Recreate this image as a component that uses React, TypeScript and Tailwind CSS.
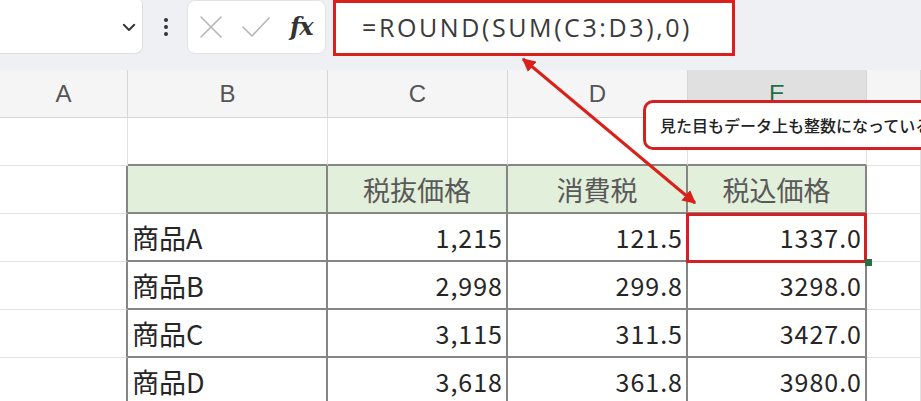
import React from 'react';

const cols = [128, 200, 180, 180, 179, 54];
const letters = ['A', 'B', 'C', 'D', 'E', ''];

type Cell = { text?: string; align?: 'left' | 'right' | 'center'; head?: boolean };

const rows: Cell[][] = [
  [{}, {}, {}, {}, {}, {}],
  [{}, { head: true }, { text: '税抜価格', align: 'center', head: true }, { text: '消費税', align: 'center', head: true }, { text: '税込価格', align: 'center', head: true }, {}],
  [{}, { text: '商品A' }, { text: '1,215', align: 'right' }, { text: '121.5', align: 'right' }, { text: '1337.0', align: 'right' }, {}],
  [{}, { text: '商品B' }, { text: '2,998', align: 'right' }, { text: '299.8', align: 'right' }, { text: '3298.0', align: 'right' }, {}],
  [{}, { text: '商品C' }, { text: '3,115', align: 'right' }, { text: '311.5', align: 'right' }, { text: '3427.0', align: 'right' }, {}],
  [{}, { text: '商品D' }, { text: '3,618', align: 'right' }, { text: '361.8', align: 'right' }, { text: '3980.0', align: 'right' }, {}],
];

// table area = rows 1..5, cols 1..4
const inTable = (r: number, c: number) => r >= 1 && r <= 5 && c >= 1 && c <= 4;

export default function App() {
  return (
    <div className="relative w-[921px] h-[401px] overflow-hidden bg-white font-['Noto_Sans_CJK_JP',sans-serif] text-[#262626]">
      {/* Formula bar */}
      <div className="h-[70px] bg-[#eef0f3] flex items-start">
        <div className="w-[143px] h-[54px] bg-white rounded-br-lg rounded-tr-sm border-r border-b border-[#dcdee2] flex items-center justify-end pr-[4px]">
          <ChevronIcon className="w-[18px] h-[18px] text-[#333]" />
        </div>
        <div className="w-[44px] h-[54px] flex flex-col items-center justify-center gap-[3px] pl-[1px]">
          <span className="w-[4px] h-[4px] rounded-full bg-[#333]" />
          <span className="w-[4px] h-[4px] rounded-full bg-[#333]" />
          <span className="w-[4px] h-[4px] rounded-full bg-[#333]" />
        </div>
        <div className="w-[139px] h-[54px] bg-white rounded-lg border border-[#e1e3e6] flex items-center pl-[11px]">
          <CrossIcon className="w-[24px] h-[24px] text-[#b5b5b5]" />
          <CheckIcon className="w-[30px] h-[30px] ml-[18px] text-[#b5b5b5]" />
          <span className="ml-[19px] font-['DejaVu_Serif',serif] italic font-bold text-[24px] text-[#333] tracking-[-1px]">fx</span>
        </div>
        <div className="ml-[7px] w-[402px] h-[56px] bg-white border-[3px] border-[#d9201b] flex items-center pl-[26px]">
          <span className="font-['Open_Sans',sans-serif] text-[25px] text-[#3a3a3a] tracking-[2.6px]">=ROUND(SUM(C3:D3),0)</span>
        </div>
      </div>

      {/* Column headers */}
      <div className="flex h-[48px] bg-[#f5f5f5] border-b border-[#d6d6d6]">
        {cols.map((w, i) => (
          <div
            key={i}
            style={{ width: w }}
            className={
              'shrink-0 flex items-center justify-center border-r border-[#d6d6d6] text-[24px] font-["Liberation_Sans",sans-serif] ' +
              (i === 4 ? 'bg-[#e0e0e0] text-[#1e7145]' : 'text-[#555]')
            }
          >
            {letters[i]}
          </div>
        ))}
      </div>

      {/* Cells */}
      {rows.map((row, r) => (
        <div key={r} className="flex h-[48px]">
          {row.map((cell, c) => {
            const darkRight = inTable(r, c) || inTable(r, c + 1);
            const darkBottom = inTable(r, c) || inTable(r + 1, c);
            return (
              <div
                key={c}
                style={{ width: cols[c] }}
                className={
                  'shrink-0 flex items-center leading-none ' +
                  (cell.align === 'right' ? 'text-[25px] tracking-[1px] ' : 'text-[27px] ') +
                  (darkRight ? 'border-r-2 border-r-[#858585] ' : 'border-r border-r-[#e1e1e1] ') +
                  (darkBottom ? 'border-b-2 border-b-[#858585] ' : 'border-b border-b-[#e1e1e1] ') +
                  (cell.head ? 'bg-[#e2efda] text-[#595959] ' : '') +
                  (cell.align === 'right' ? 'justify-end pr-[3px] ' : cell.align === 'center' ? 'justify-center ' : 'justify-start pl-[4px] ')
                }
              >
                {cell.text}
              </div>
            );
          })}
        </div>
      ))}

      {/* Selected cell highlight */}
      <div className="absolute left-[686px] top-[213px] w-[181px] h-[50px] border-[3px] border-[#d42020]" />
      <div className="absolute left-[865px] top-[259px] w-[7px] h-[7px] bg-[#217346]" />

      {/* Arrow */}
      <svg className="absolute inset-0 w-[921px] h-[401px] pointer-events-none" viewBox="0 0 921 401">
        <defs>
          <marker id="ah" viewBox="0 0 10 10" refX="9" refY="5" markerWidth="4.5" markerHeight="4.5" orient="auto-start-reverse">
            <path d="M0 0 L10 5 L0 10 z" fill="#d9201b" />
          </marker>
        </defs>
        <line x1="523" y1="59" x2="695" y2="203" stroke="#d9201b" strokeWidth="3" markerStart="url(#ah)" markerEnd="url(#ah)" />
      </svg>

      {/* Callout */}
      <div className="absolute left-[643px] top-[100px] w-[320px] h-[50px] rounded-[10px] border-[3px] border-[#d42020] bg-white flex items-center pl-[14px] whitespace-nowrap">
        <span className="text-[16px] font-medium text-[#222]">見た目もデータ上も整数になっている</span>
      </div>
    </div>
  );
}

function ChevronIcon({ className }: { className?: string }) {
  return (
    <svg className={className} fill="none" viewBox="0 0 24 24" stroke="currentColor">
      <path strokeLinecap="round" strokeLinejoin="round" strokeWidth={2.5} d="M5 9l7 7 7-7" />
    </svg>
  );
}

function CrossIcon({ className }: { className?: string }) {
  return (
    <svg className={className} fill="none" viewBox="0 0 24 24" stroke="currentColor">
      <path strokeLinecap="round" strokeWidth={1.6} d="M2 2l20 20M22 2L2 22" />
    </svg>
  );
}

function CheckIcon({ className }: { className?: string }) {
  return (
    <svg className={className} fill="none" viewBox="0 0 30 30" stroke="currentColor">
      <path strokeLinecap="round" strokeLinejoin="round" strokeWidth={1.6} d="M2 15l9 9L28 6" />
    </svg>
  );
}
